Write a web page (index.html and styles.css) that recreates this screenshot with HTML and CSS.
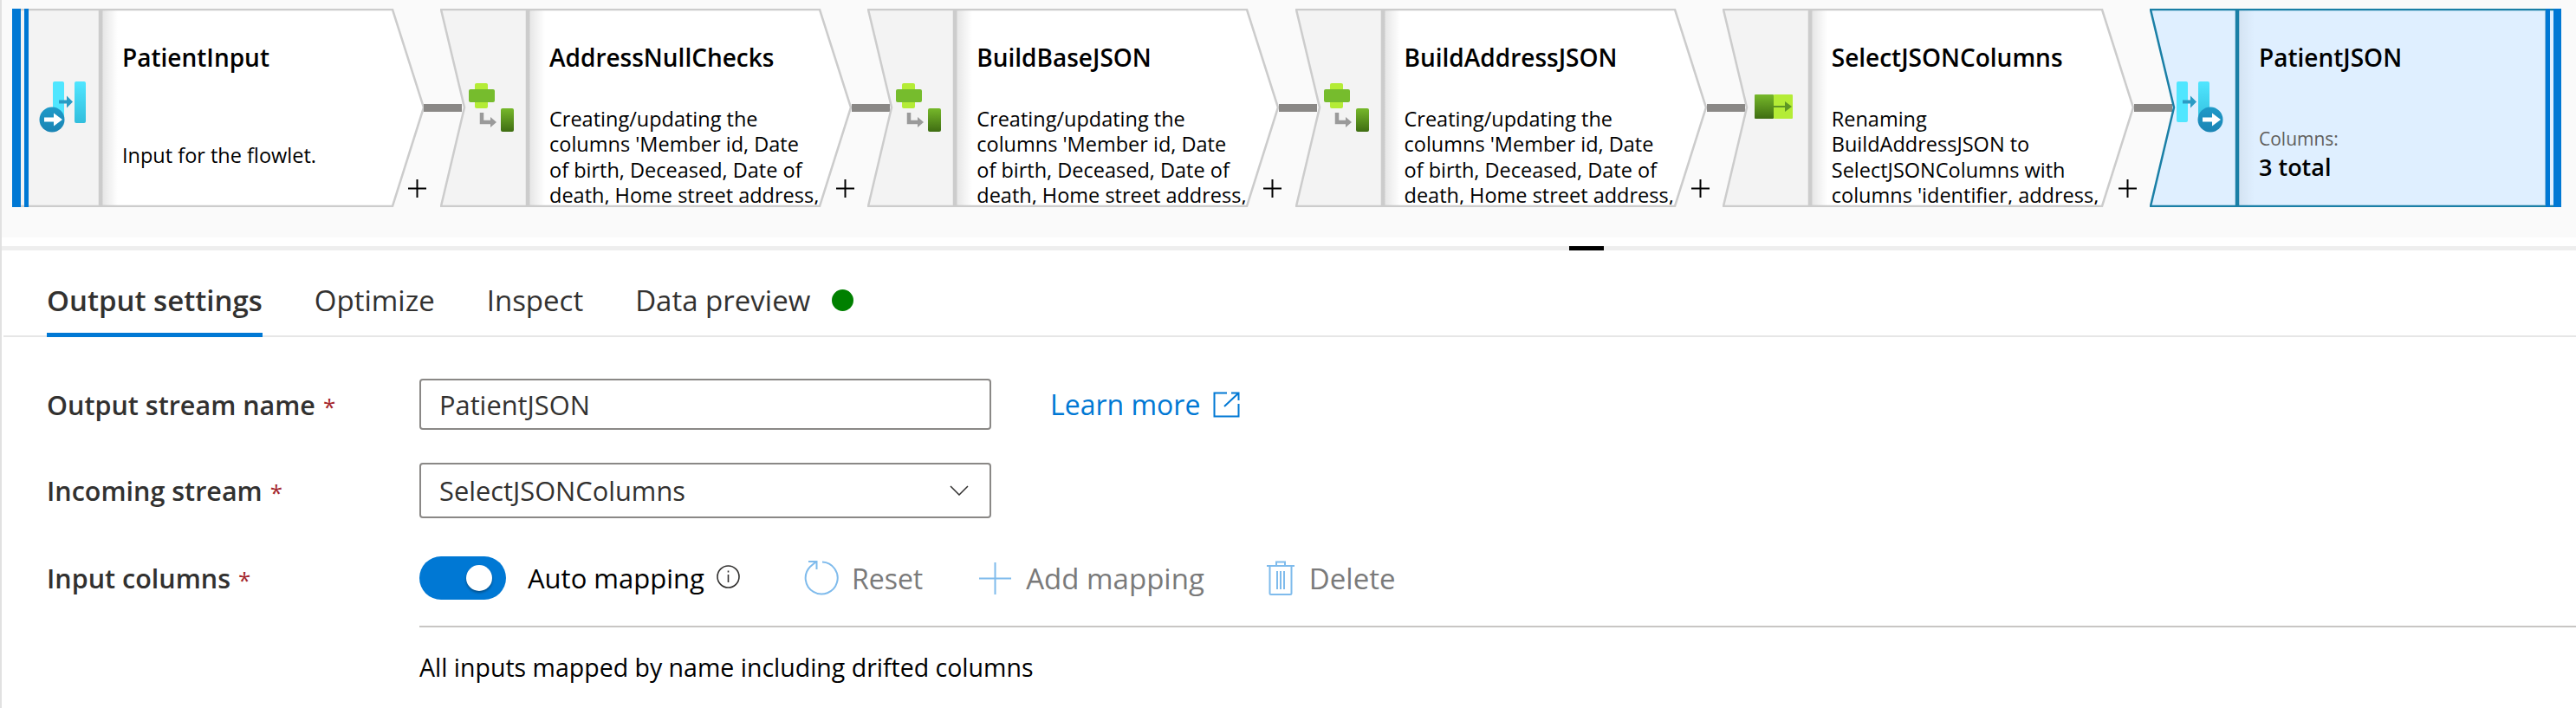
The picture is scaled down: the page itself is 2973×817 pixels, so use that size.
FILE: index.html
```html
<!DOCTYPE html>
<html>
<head>
    <meta charset="utf-8">
    <title>Output settings</title>
    <link rel="stylesheet" href="styles.css">
</head>
<body>
    <!-- shared gradients and icons -->
    <svg class="defs" aria-hidden="true">
        <defs>
            <linearGradient id="g-shade"><stop offset="0" stop-color="#000" stop-opacity=".1"/><stop offset="1" stop-color="#000" stop-opacity="0"/></linearGradient>
            <linearGradient id="g-cyan" x2="0" y2="1"><stop offset="0" stop-color="#50e6ff"/><stop offset="1" stop-color="#32bedd"/></linearGradient>
            <linearGradient id="g-ball" x2="0" y2="1"><stop offset="0" stop-color="#1f9ac8"/><stop offset="1" stop-color="#1a84b4"/></linearGradient>
            <linearGradient id="g-green" x2="0" y2="1"><stop offset="0" stop-color="#76b82a"/><stop offset="1" stop-color="#3f6d12"/></linearGradient>
            <symbol id="ico-derive" viewBox="0 0 100 229">
                <rect x="40" y="86" width="15" height="29" rx="2" fill="#b4ec36"/>
                <rect x="33" y="93" width="30" height="15" rx="2" fill="#76bc2d"/>
                <path d="M48 120v11h11" fill="none" stroke="#9a9a9a" stroke-width="4.5"/>
                <path d="M58 125l7 6-7 6z" fill="#9a9a9a"/>
                <rect x="70" y="115" width="15" height="27" rx="2" fill="url(#g-green)"/>
            </symbol>
            <symbol id="ico-select" viewBox="0 0 100 229">
                <rect x="59" y="99" width="22" height="28" rx="1" fill="#b4ec36"/>
                <rect x="37" y="99" width="22" height="28" rx="1" fill="url(#g-green)"/>
                <path d="M59 112h13v-5l8 6-8 6v-5H59z" fill="#5e9624"/>
            </symbol>
            <symbol id="ico-plus" viewBox="0 0 21 21">
                <path d="M10.5 0v21M0 10.5h21" stroke="#000" stroke-width="2"/>
            </symbol>
        </defs>
    </svg>

    <div class="canvas">
        <div class="node node-first">
            <svg class="node-shape" viewBox="0 0 475 229">
                <polygon points="1,1 101,1 101,228 1,228" fill="#f3f3f3" stroke="#ccc" stroke-width="2.5"/>
                <polygon points="103,1 439,1 475,114 439,228 103,228" fill="#fff" stroke="#ccc" stroke-width="2.5"/>
                <polygon points="104,2 122,2 122,227 104,227" fill="url(#g-shade)"/>
                <rect x="0" y="0" width="10" height="229" fill="#0078d4"/>
                <rect x="14" y="0" width="5" height="229" fill="#0078d4"/>
            </svg>
            <svg class="node-icon" viewBox="0 0 100 229">
                <rect x="47" y="84" width="13" height="47" rx="2" fill="#50e6ff"/>
                <rect x="72" y="84" width="13" height="48" rx="2" fill="url(#g-cyan)"/>
                <path d="M54 105.500h9v-5l7 7-7 7v-5h-9z" fill="#2a9bc4"/>
                <circle cx="46" cy="128" r="14.500" fill="url(#g-ball)"/>
                <path d="M37 125.500h11v-5l10 7.500-10 7.500v-5H37z" fill="#fff"/>
            </svg>
            <div class="node-body">
                <div class="node-title">PatientInput</div>
                <div class="node-desc node-desc-low">Input for the flowlet.</div>
            </div>
            <svg class="node-plus"><use href="#ico-plus"/></svg>
            <div class="node-link"></div>
        </div>

        <div class="node">
            <svg class="node-shape" viewBox="0 0 475 229">
                <polygon points="1,1 100,1 100,228 1,228 28,114" fill="#f3f3f3" stroke="#ccc" stroke-width="2.5"/>
                <polygon points="102,1 438,1 474,114 438,228 102,228" fill="#fff" stroke="#ccc" stroke-width="2.5"/>
                <polygon points="103,2 121,2 121,227 103,227" fill="url(#g-shade)"/>
            </svg>
            <svg class="node-icon"><use href="#ico-derive"/></svg>
            <div class="node-body">
                <div class="node-title">AddressNullChecks</div>
                <div class="node-desc">Creating/updating the<br>columns 'Member id, Date<br>of birth, Deceased, Date of<br>death, Home street address,</div>
            </div>
            <svg class="node-plus"><use href="#ico-plus"/></svg>
            <div class="node-link"></div>
        </div>

        <div class="node">
            <svg class="node-shape" viewBox="0 0 475 229">
                <polygon points="1,1 100,1 100,228 1,228 28,114" fill="#f3f3f3" stroke="#ccc" stroke-width="2.5"/>
                <polygon points="102,1 438,1 474,114 438,228 102,228" fill="#fff" stroke="#ccc" stroke-width="2.5"/>
                <polygon points="103,2 121,2 121,227 103,227" fill="url(#g-shade)"/>
            </svg>
            <svg class="node-icon"><use href="#ico-derive"/></svg>
            <div class="node-body">
                <div class="node-title">BuildBaseJSON</div>
                <div class="node-desc">Creating/updating the<br>columns 'Member id, Date<br>of birth, Deceased, Date of<br>death, Home street address,</div>
            </div>
            <svg class="node-plus"><use href="#ico-plus"/></svg>
            <div class="node-link"></div>
        </div>

        <div class="node">
            <svg class="node-shape" viewBox="0 0 475 229">
                <polygon points="1,1 100,1 100,228 1,228 28,114" fill="#f3f3f3" stroke="#ccc" stroke-width="2.5"/>
                <polygon points="102,1 438,1 474,114 438,228 102,228" fill="#fff" stroke="#ccc" stroke-width="2.5"/>
                <polygon points="103,2 121,2 121,227 103,227" fill="url(#g-shade)"/>
            </svg>
            <svg class="node-icon"><use href="#ico-derive"/></svg>
            <div class="node-body">
                <div class="node-title">BuildAddressJSON</div>
                <div class="node-desc">Creating/updating the<br>columns 'Member id, Date<br>of birth, Deceased, Date of<br>death, Home street address,</div>
            </div>
            <svg class="node-plus"><use href="#ico-plus"/></svg>
            <div class="node-link"></div>
        </div>

        <div class="node">
            <svg class="node-shape" viewBox="0 0 475 229">
                <polygon points="1,1 100,1 100,228 1,228 28,114" fill="#f3f3f3" stroke="#ccc" stroke-width="2.5"/>
                <polygon points="102,1 438,1 474,114 438,228 102,228" fill="#fff" stroke="#ccc" stroke-width="2.5"/>
                <polygon points="103,2 121,2 121,227 103,227" fill="url(#g-shade)"/>
            </svg>
            <svg class="node-icon"><use href="#ico-select"/></svg>
            <div class="node-body">
                <div class="node-title">SelectJSONColumns</div>
                <div class="node-desc">Renaming<br>BuildAddressJSON to<br>SelectJSONColumns with<br>columns 'identifier, address,</div>
            </div>
            <svg class="node-plus"><use href="#ico-plus"/></svg>
            <div class="node-link"></div>
        </div>

        <div class="node node-last">
            <svg class="node-shape" viewBox="0 0 475 229">
                <polygon points="1,1 100,1 100,228 1,228 28,114" fill="#dfefff" stroke="#1a7fa6" stroke-width="2.5"/>
                <rect x="102" y="1" width="372" height="227" fill="#dfefff" stroke="#1a7fa6" stroke-width="2.5"/>
                <polygon points="103,2 121,2 121,227 103,227" fill="url(#g-shade)" opacity=".5"/>
                <rect x="456" y="2" width="1" height="225" fill="#86b8d8"/>
                <rect x="457" y="0" width="5" height="229" fill="#0078d4"/>
                <rect x="466" y="0" width="9" height="229" fill="#0078d4"/>
            </svg>
            <svg class="node-icon" viewBox="0 0 100 229">
                <rect x="31" y="84" width="13" height="47" rx="2" fill="#50e6ff"/>
                <rect x="56" y="84" width="13" height="48" rx="2" fill="url(#g-cyan)"/>
                <path d="M38 105.500h9v-5l7 7-7 7v-5h-9z" fill="#2a9bc4"/>
                <circle cx="70" cy="128" r="14.500" fill="url(#g-ball)"/>
                <path d="M61 125.500h11v-5l10 7.500-10 7.500v-5H61z" fill="#fff"/>
            </svg>
            <div class="node-body">
                <div class="node-title">PatientJSON</div>
                <div class="node-meta">Columns:</div>
                <div class="node-total">3 total</div>
            </div>
        </div>
    </div>

    <div class="splitter"><div class="splitter-bar"><span class="splitter-handle"></span></div></div>

    <div class="tabs">
        <div class="tab active">Output settings</div>
        <div class="tab">Optimize</div>
        <div class="tab">Inspect</div>
        <div class="tab">Data preview<span class="status-dot"></span></div>
    </div>

    <div class="form">
        <div class="row row-output">
            <label class="field-label">Output stream name<span class="req">*</span></label>
            <div class="field">PatientJSON</div>
            <a class="learn-more">Learn more
                <svg class="learn-icon" viewBox="0 0 31 30"><path d="M16 1.500H1.500v27h28V14M13 17L29 2M21 1.500h8.500V10" fill="none" stroke="#0078d4" stroke-width="2"/></svg>
            </a>
        </div>
        <div class="row row-incoming">
            <label class="field-label">Incoming stream<span class="req">*</span></label>
            <div class="field field-select">SelectJSONColumns
                <svg class="chevron" viewBox="0 0 22 12"><path d="M1 1l10 10L21 1" fill="none" stroke="#323130" stroke-width="1.500"/></svg>
            </div>
        </div>
        <div class="row row-columns">
            <label class="field-label">Input columns<span class="req">*</span></label>
            <div class="toggle"><span class="toggle-knob"></span></div>
            <span class="toggle-label">Auto mapping</span>
            <svg class="info" viewBox="0 0 27 27">
                <circle cx="13.500" cy="13.500" r="12.500" fill="none" stroke="#323130" stroke-width="1.600"/>
                <path d="M13.500 11v9M13.500 6.500v2" stroke="#323130" stroke-width="1.600"/>
            </svg>
            <button class="tool tool-reset">
                <svg class="tool-reset-icon" viewBox="0 0 40 40"><path d="M21 1.500A18.500 18.500 0 1 1 7 7L14 1M5 1h9.500v9" fill="none" stroke="#7fbbec" stroke-width="2"/></svg>
                Reset
            </button>
            <button class="tool tool-add">
                <svg class="tool-add-icon" viewBox="0 0 37 37"><path d="M18.500 0v37M0 18.500h37" stroke="#7fbbec" stroke-width="2"/></svg>
                Add mapping
            </button>
            <button class="tool tool-delete">
                <svg class="tool-delete-icon" viewBox="0 0 32 40"><path d="M0 6h32M11 6V1.500h10V6M3.500 6v31.500a1.500 1.500 0 0 0 1.500 1.500h22a1.500 1.500 0 0 0 1.500-1.500V6M12 12v21M16 12v21M20 12v21" fill="none" stroke="#7fbbec" stroke-width="2"/></svg>
                Delete
            </button>
        </div>
        <div class="mapping">
            <p class="mapping-note">All inputs mapped by name including drifted columns</p>
        </div>
    </div>
</body>
</html>
```

FILE: styles.css
```css
html, body {
    margin: 0;
    padding: 0;
}

body {
    width: 2973px;
    height: 817px;
    overflow: hidden;
    background-color: #fff;
    color: #323130;
    font-family: "Open Sans", "Noto Sans", sans-serif;
    font-size: 30px;
    border-left: 2px solid #e1e1e1;
    box-sizing: border-box;
}

.defs {
    position: absolute;
    width: 0;
    height: 0;
}

/* flow canvas */
.canvas {
    display: flex;
    gap: 19px;
    height: 274px;
    padding: 10px 0 0 12px;
    box-sizing: border-box;
    background-color: #fafafa;
}

.node {
    position: relative;
    display: flex;
    width: 474.25px;
    height: 229px;
}

.node-first {
    width: 475px;
}

.node-shape {
    position: absolute;
    left: 0;
    top: 0;
    width: 475px;
    height: 229px;
}

.node-icon {
    position: relative;
    flex: none;
    width: 100px;
    height: 229px;
}

.node-body {
    position: relative;
    width: 316px;
    height: 226px;
    padding: 0 0 0 26px;
    overflow: hidden;
    color: #000;
    white-space: nowrap;
}

.node-first .node-body {
    padding-left: 27px;
}

.node-title {
    margin-top: 37px;
    font-size: 28px;
    font-weight: 600;
    line-height: 38px;
}

.node-desc {
    margin-top: 38px;
    font-size: 23.5px;
    line-height: 29.4px;
}

.node-desc-low {
    margin-top: 80px;
}

.node-meta {
    margin-top: 60px;
    font-size: 21px;
    line-height: 30px;
    color: #605e5c;
}

.node-total {
    font-size: 27px;
    font-weight: 600;
    line-height: 36px;
}

.node-plus {
    position: absolute;
    left: 457px;
    top: 197px;
    width: 21px;
    height: 21px;
}

.node-link {
    position: absolute;
    left: 475px;
    top: 110px;
    width: 44px;
    height: 9px;
    background-color: #8a8886;
}

/* drag handle between canvas and settings */
.splitter {
    height: 15px;
    padding-top: 10px;
    box-sizing: border-box;
}

.splitter-bar {
    display: flex;
    justify-content: center;
    height: 5px;
    background-color: #eee;
}

.splitter-handle {
    width: 40px;
    height: 5px;
    margin-left: 687px;
    background-color: #000;
}

/* tabs */
.tabs {
    display: flex;
    gap: 60px;
    height: 100px;
    margin-left: 2px;
    padding-left: 50px;
    border-bottom: 2px solid #e6e6e6;
    box-sizing: border-box;
}

.tab {
    display: flex;
    align-items: center;
    height: 100px;
    padding-top: 15px;
    box-sizing: border-box;
    font-size: 33px;
}

.tab.active {
    font-weight: 600;
    padding-top: 20px;
    border-bottom: 5px solid #0078d4;
}

.status-dot {
    width: 25px;
    height: 25px;
    margin-left: 25px;
    border-radius: 50%;
    background-color: #008000;
}

/* settings form */
.form {
    padding: 48px 0 0 52px;
}

.row {
    display: flex;
    align-items: center;
}

.row-incoming {
    margin-top: 38px;
}

.row-columns {
    margin-top: 44px;
}

.field-label {
    flex: none;
    width: 430px;
    font-size: 30.5px;
    font-weight: 600;
}

.req {
    margin-left: 9px;
    color: #a4262c;
    font-size: 26px;
    font-weight: 400;
}

.field {
    display: flex;
    align-items: center;
    justify-content: space-between;
    width: 660px;
    height: 59px;
    padding: 0 24px 0 21px;
    border: 2px solid #8a8886;
    border-radius: 4px;
    box-sizing: border-box;
    font-size: 30.8px;
}

.field-select {
    height: 64px;
}

.chevron {
    width: 22px;
    height: 12px;
}

.learn-more {
    display: flex;
    align-items: center;
    gap: 15px;
    margin-left: 68px;
    color: #0078d4;
    font-size: 32px;
}

.learn-icon {
    width: 31px;
    height: 30px;
}

.toggle {
    display: flex;
    align-items: center;
    justify-content: flex-end;
    width: 100px;
    height: 50px;
    padding-right: 16px;
    border-radius: 25px;
    box-sizing: border-box;
    background-color: #0078d4;
}

.toggle-knob {
    width: 30px;
    height: 30px;
    border-radius: 50%;
    background-color: #fff;
    box-shadow: 0 2px 3px rgba(0,0,0,0.35);
}

.toggle-label {
    margin-left: 25px;
    font-size: 31px;
    color: #000;
}

.info {
    width: 27px;
    height: 27px;
    margin: 0 0 4px 14px;
}

.tool {
    display: flex;
    align-items: center;
    padding: 0;
    border: 0;
    background: none;
    font: inherit;
    font-size: 33px;
    color: #7a7a7a;
}

.tool-reset {
    margin-left: 74px;
    font-size: 32px;
}

.tool-reset-icon {
    width: 40px;
    height: 40px;
    margin-right: 15px;
}

.tool-add {
    margin-left: 65px;
}

.tool-add-icon {
    width: 37px;
    height: 37px;
    margin-right: 17px;
}

.tool-delete {
    margin-left: 72px;
}

.tool-delete-icon {
    width: 32px;
    height: 40px;
    margin-right: 17px;
}

.mapping {
    margin: 30px 0 0 430px;
    border-top: 2px solid #c8c6c4;
}

.mapping-note {
    margin: 27px 0 0;
    font-size: 28.5px;
    line-height: 38px;
    color: #000;
}
```
